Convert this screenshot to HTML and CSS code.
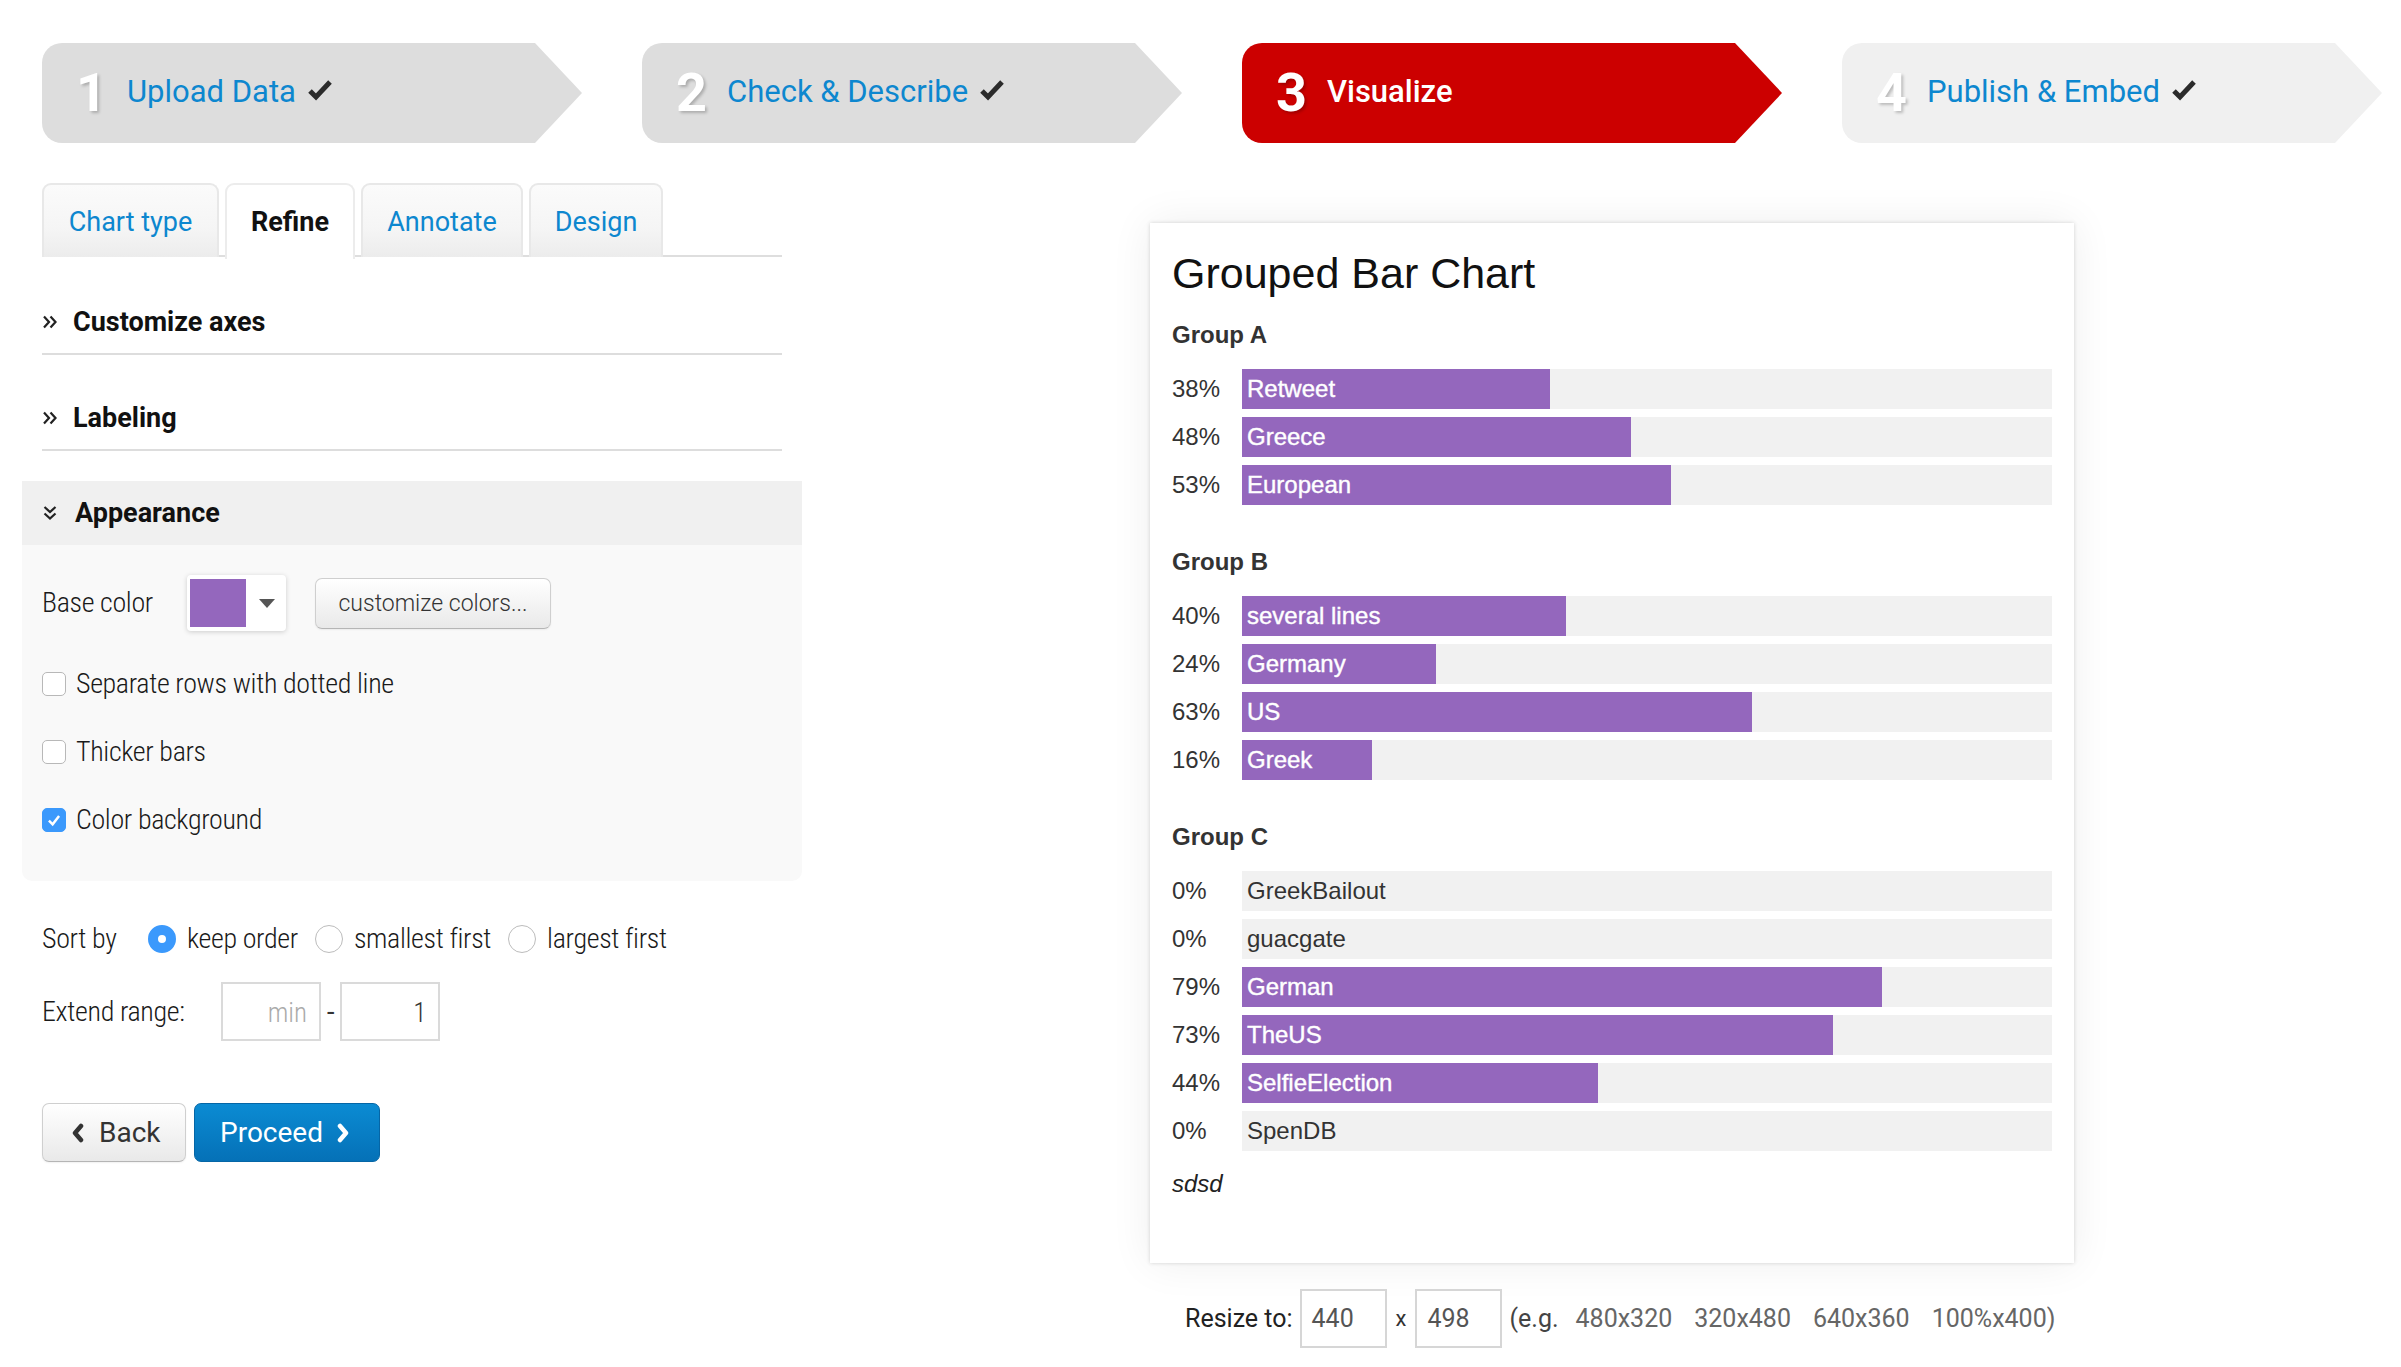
FILE: index.html
```html
<!DOCTYPE html>
<html lang="en">
<head>
<meta charset="utf-8">
<title>Visualize</title>
<link rel="stylesheet" href="styles.css">
</head>
<body>
<div class="page">
  <nav class="steps">
    <div class="step done">
      <span class="num">1</span><span class="step-label">Upload Data</span>
      <svg class="tick" viewBox="0 0 26 22"><polyline points="3,12 9,18 23,3" /></svg>
    </div>
    <div class="step done">
      <span class="num">2</span><span class="step-label">Check &amp; Describe</span>
      <svg class="tick" viewBox="0 0 26 22"><polyline points="3,12 9,18 23,3" /></svg>
    </div>
    <div class="step active">
      <span class="num">3</span><span class="step-label">Visualize</span>
    </div>
    <div class="step later">
      <span class="num">4</span><span class="step-label">Publish &amp; Embed</span>
      <svg class="tick" viewBox="0 0 26 22"><polyline points="3,12 9,18 23,3" /></svg>
    </div>
  </nav>

  <div class="main">
    <div class="left">
      <ul class="tabs">
        <li class="tab t-type">Chart type</li>
        <li class="tab current t-refine">Refine</li>
        <li class="tab t-annotate">Annotate</li>
        <li class="tab t-design">Design</li>
      </ul>

      <div class="section first">
        <svg class="chev" viewBox="0 0 16 16"><path d="M2 2.5 L7 8 L2 13.5 M8.5 2.5 L13.5 8 L8.5 13.5" /></svg>
        <span>Customize axes</span>
      </div>
      <div class="section">
        <svg class="chev" viewBox="0 0 16 16"><path d="M2 2.5 L7 8 L2 13.5 M8.5 2.5 L13.5 8 L8.5 13.5" /></svg>
        <span>Labeling</span>
      </div>

      <div class="panel">
        <div class="panel-head">
          <svg class="chev down" viewBox="0 0 16 16"><path d="M2.5 2 L8 7 L13.5 2 M2.5 8.5 L8 13.5 L13.5 8.5" /></svg>
          <span>Appearance</span>
        </div>
        <div class="panel-body">
          <div class="base-row">
            <span class="cond label-base">Base color</span>
            <div class="swatch-picker">
              <span class="swatch"></span>
              <span class="caret"></span>
            </div>
            <button class="btn-light customize">customize colors...</button>
          </div>
          <div class="check-row">
            <span class="box"></span><span class="cond">Separate rows with dotted line</span>
          </div>
          <div class="check-row">
            <span class="box"></span><span class="cond">Thicker bars</span>
          </div>
          <div class="check-row">
            <span class="box checked"><svg viewBox="0 0 16 16"><polyline points="3.5,8.5 6.8,11.8 12.5,4.5" /></svg></span><span class="cond">Color background</span>
          </div>
        </div>
      </div>

      <div class="sort-row">
        <span class="cond sort-label">Sort by</span>
        <span class="radio on"></span><span class="cond opt">keep order</span>
        <span class="radio"></span><span class="cond opt">smallest first</span>
        <span class="radio"></span><span class="cond opt">largest first</span>
      </div>

      <div class="range-row">
        <span class="cond range-label">Extend range:</span>
        <span class="field placeholder">min</span>
        <span class="dash">-</span>
        <span class="field">1</span>
      </div>

      <div class="buttons">
        <button class="btn-light back">
          <svg class="ico" viewBox="0 0 14 20"><polyline points="10,3 4,10 10,17" /></svg>Back
        </button>
        <button class="btn-primary proceed">
          Proceed<svg class="ico" viewBox="0 0 14 20"><polyline points="4,3 10,10 4,17" /></svg>
        </button>
      </div>
    </div>

    <div class="right">
      <div class="chart">
        <h1 class="chart-title">Grouped Bar Chart</h1>

        <div class="group">
          <div class="group-label">Group A</div>
          <div class="bar-row"><span class="pct">38%</span><div class="track"><div class="fill" style="width:38%"></div><span class="name">Retweet</span></div></div>
          <div class="bar-row"><span class="pct">48%</span><div class="track"><div class="fill" style="width:48%"></div><span class="name">Greece</span></div></div>
          <div class="bar-row"><span class="pct">53%</span><div class="track"><div class="fill" style="width:53%"></div><span class="name">European</span></div></div>
        </div>

        <div class="group">
          <div class="group-label">Group B</div>
          <div class="bar-row"><span class="pct">40%</span><div class="track"><div class="fill" style="width:40%"></div><span class="name">several lines</span></div></div>
          <div class="bar-row"><span class="pct">24%</span><div class="track"><div class="fill" style="width:24%"></div><span class="name">Germany</span></div></div>
          <div class="bar-row"><span class="pct">63%</span><div class="track"><div class="fill" style="width:63%"></div><span class="name">US</span></div></div>
          <div class="bar-row"><span class="pct">16%</span><div class="track"><div class="fill" style="width:16%"></div><span class="name">Greek</span></div></div>
        </div>

        <div class="group">
          <div class="group-label">Group C</div>
          <div class="bar-row"><span class="pct">0%</span><div class="track"><div class="fill" style="width:0%"></div><span class="name zero">GreekBailout</span></div></div>
          <div class="bar-row"><span class="pct">0%</span><div class="track"><div class="fill" style="width:0%"></div><span class="name zero">guacgate</span></div></div>
          <div class="bar-row"><span class="pct">79%</span><div class="track"><div class="fill" style="width:79%"></div><span class="name">German</span></div></div>
          <div class="bar-row"><span class="pct">73%</span><div class="track"><div class="fill" style="width:73%"></div><span class="name">TheUS</span></div></div>
          <div class="bar-row"><span class="pct">44%</span><div class="track"><div class="fill" style="width:44%"></div><span class="name">SelfieElection</span></div></div>
          <div class="bar-row"><span class="pct">0%</span><div class="track"><div class="fill" style="width:0%"></div><span class="name zero">SpenDB</span></div></div>
        </div>

        <div class="notes">sdsd</div>
      </div>

      <div class="resize">
        <span class="resize-label">Resize to:</span>
        <span class="rfield">440</span>
        <span class="times">x</span>
        <span class="rfield">498</span>
        <span class="eg">(e.g.</span>
        <span class="preset">480x320</span>
        <span class="preset">320x480</span>
        <span class="preset">640x360</span>
        <span class="preset">100%x400)</span>
      </div>
    </div>
  </div>
</div>
</body>
</html>
```

FILE: styles.css
```css
* { box-sizing: border-box; }

html, body {
  margin: 0;
  padding: 0;
  background: #ffffff;
}

body {
  font-family: Roboto, "Liberation Sans", sans-serif;
  color: #222;
}

.page {
  padding: 43px 0 0 42px;
}

/* ---------- steps ---------- */
.steps {
  display: flex;
  gap: 60px;
}

.step {
  width: 540px;
  height: 100px;
  display: flex;
  align-items: center;
  padding-left: 34px;
  border-radius: 20px 10px 10px 20px;
  clip-path: polygon(0 0, calc(100% - 47px) 0, 100% 50%, calc(100% - 47px) 100%, 0 100%);
  background: #dddddd;
}

.step.active { background: #cc0000; }
.step.later { background: #f0f0f0; }

.num {
  font-size: 54px;
  font-weight: 700;
  line-height: 1;
  color: #fff;
  text-shadow: 2px 2px 3px rgba(0, 0, 0, 0.22);
  margin-right: 20px;
}

.step-label {
  font-size: 31px;
  color: #0d87cf;
  line-height: 1;
  margin-bottom: 4px;
}

.step.active .step-label {
  color: #fff;
  font-weight: 500;
}

.tick {
  width: 26px;
  height: 22px;
  margin-left: 11px;
  margin-top: -6px;
}

.tick polyline {
  fill: none;
  stroke: #2b2b2b;
  stroke-width: 5;
  stroke-linecap: butt;
  stroke-linejoin: miter;
}

/* ---------- layout ---------- */
.main {
  display: flex;
  gap: 368px;
  margin-top: 40px;
}

.left {
  width: 740px;
  flex: none;
}

.right {
  width: 924px;
  flex: none;
  padding-top: 40px;
}

/* ---------- tabs ---------- */
.tabs {
  list-style: none;
  margin: 0;
  padding: 0;
  display: flex;
  gap: 6px;
  border-bottom: 2px solid #dedede;
  height: 74px;
}

.tab {
  height: 74px;
  padding: 0;
  text-align: center;
  font-size: 27px;
  line-height: 74px;
  color: #0d87cf;
  border: 2px solid #e8e8e8;
  border-bottom: none;
  border-radius: 9px 9px 0 0;
  background: linear-gradient(#fbfbfb, #f5f5f5 60%, #ececec);
}

.t-type { width: 177px; }
.t-refine { width: 130px; }
.t-annotate { width: 162px; }
.t-design { width: 134px; }

.tab.current {
  background: #fff;
  color: #111;
  font-weight: 700;
  height: 76px;
  border-color: #ececec;
}

/* ---------- sections ---------- */
.section {
  display: flex;
  align-items: center;
  padding: 46px 0 14px;
  border-bottom: 2px solid #dddddd;
  font-size: 27px;
  font-weight: 700;
  line-height: 34px;
  color: #111;
}

.section.first { padding-top: 48px; }

.chev {
  width: 16px;
  height: 16px;
  margin-right: 15px;
  flex: none;
}

.chev path {
  fill: none;
  stroke: #222;
  stroke-width: 2.2;
}

/* ---------- appearance panel ---------- */
.panel {
  margin: 30px -20px 0;
  background: #f9f9f9;
  border-radius: 0 0 10px 10px;
}

.panel-head {
  display: flex;
  align-items: center;
  background: #f0f0f0;
  padding: 15px 20px;
  font-size: 27px;
  font-weight: 700;
  line-height: 34px;
  color: #111;
}

.panel-head .chev { margin-right: 17px; }

.panel-body {
  padding: 30px 20px 46px;
}

.cond {
  font-family: "Roboto Condensed", "Liberation Sans Narrow", "DejaVu Sans Condensed", Roboto, sans-serif;
  font-stretch: condensed;
  font-size: 28px;
  letter-spacing: -0.35px;
  font-weight: 300;
  color: #1a1a1a;
  line-height: 30px;
}

.base-row {
  display: flex;
  align-items: center;
  height: 56px;
}

.label-base { width: 145px; flex: none; }

.swatch-picker {
  width: 99px;
  height: 56px;
  background: #fff;
  border-radius: 4px;
  box-shadow: 0 1px 5px rgba(0, 0, 0, 0.18);
  display: flex;
  align-items: center;
  padding-left: 3px;
  flex: none;
}

.swatch {
  width: 56px;
  height: 48px;
  background: #9467bd;
}

.caret {
  margin-left: 13px;
  width: 0;
  height: 0;
  border-left: 8px solid transparent;
  border-right: 8px solid transparent;
  border-top: 9px solid #555;
}

.btn-light {
  font-family: Roboto, sans-serif;
  background: linear-gradient(#ffffff, #e9e9e9);
  border: 1px solid #cfcfcf;
  border-bottom-color: #b5b5b5;
  border-radius: 7px;
  color: #333;
  box-shadow: inset 0 1px 0 rgba(255, 255, 255, 0.6), 0 1px 2px rgba(0, 0, 0, 0.06);
}

.customize {
  margin-left: 29px;
  width: 236px;
  height: 51px;
  font-size: 23px;
  font-weight: 300;
  padding: 0;
}

.check-row {
  display: flex;
  align-items: center;
  margin-top: 38px;
}

.check-row:first-of-type { margin-top: 39px; }

.box {
  width: 24px;
  height: 24px;
  border: 1.5px solid #b8b8b8;
  border-radius: 5px;
  background: #fff;
  margin-right: 10px;
  flex: none;
  display: flex;
  align-items: center;
  justify-content: center;
}

.box.checked {
  background: #3b99fc;
  border-color: #3b99fc;
}

.box svg { width: 18px; height: 18px; }

.box polyline {
  fill: none;
  stroke: #fff;
  stroke-width: 2.2;
}

/* ---------- sort / range ---------- */
.sort-row {
  display: flex;
  align-items: center;
  margin-top: 38px;
  height: 40px;
}

.sort-label { width: 106px; flex: none; }

.radio {
  width: 28px;
  height: 28px;
  border-radius: 50%;
  border: 1.5px solid #bcbcbc;
  background: #fff;
  flex: none;
  margin-right: 11px;
}

.radio.on {
  border: 10px solid #3b99fc;
  background: #fff;
}

.opt { margin-right: 17px; }

.range-row {
  display: flex;
  align-items: center;
  margin-top: 23px;
}

.range-label { width: 179px; flex: none; }

.field {
  width: 100px;
  height: 59px;
  border: 2px solid #dadada;
  background: #fff;
  font-size: 27px;
  font-weight: 300;
  color: #333;
  text-align: right;
  padding: 13px 12px 0;
  font-family: "Roboto Condensed", "Liberation Sans Narrow", Roboto, sans-serif;
  font-stretch: condensed;
}

.field.placeholder { color: #aaa; }

.dash {
  font-size: 27px;
  margin: 0 6px;
  color: #333;
}

/* ---------- buttons ---------- */
.buttons {
  display: flex;
  gap: 8px;
  margin-top: 62px;
}

.back, .proceed {
  height: 59px;
  display: flex;
  align-items: center;
  font-size: 28px;
  font-family: Roboto, sans-serif;
}

.back {
  width: 144px;
  padding: 0 0 0 28px;
}

.back .ico { margin-right: 14px; }

.ico {
  width: 14px;
  height: 20px;
}

.ico polyline {
  fill: none;
  stroke-width: 4.5;
  stroke-linecap: round;
  stroke-linejoin: round;
}

.back .ico polyline { stroke: #333; }

.btn-primary {
  background: linear-gradient(#0b8bd3, #0571b7);
  border: 1px solid #0566a6;
  border-radius: 7px;
  color: #fff;
}

.proceed {
  width: 186px;
  padding: 0 0 0 25px;
}

.proceed .ico { margin-left: 13px; }
.proceed .ico polyline { stroke: #fff; }

/* ---------- chart ---------- */
.chart {
  background: #fff;
  height: 1040px;
  padding: 25px 22px;
  box-shadow: 0 0 4px rgba(0, 0, 0, 0.16), 0 0 40px rgba(0, 0, 0, 0.07);
  font-family: "Liberation Sans", Arial, sans-serif;
}

.chart-title {
  margin: 0;
  font-size: 43px;
  font-weight: 400;
  line-height: 50px;
  color: #111;
}

.group { margin-top: 42px; }
.group:first-of-type { margin-top: 22px; }

.group-label {
  font-size: 24px;
  font-weight: 700;
  line-height: 30px;
  color: #333;
  margin-bottom: 19px;
}

.bar-row {
  display: flex;
  height: 40px;
  margin-top: 8px;
}

.pct {
  width: 70px;
  flex: none;
  font-size: 24px;
  line-height: 40px;
  color: #333;
}

.track {
  flex: 1;
  display: grid;
  background: #f1f1f1;
}

.fill, .name { grid-area: 1 / 1; }

.fill {
  background: #9467bd;
  height: 40px;
}

.name {
  font-size: 24px;
  line-height: 40px;
  padding-left: 5px;
  color: #fff;
  white-space: nowrap;
  -webkit-text-stroke: 0.4px #fff;
}

.name.zero {
  color: #333;
  -webkit-text-stroke: 0;
}

.notes {
  margin-top: 18px;
  font-size: 24px;
  font-style: italic;
  line-height: 30px;
  color: #222;
}

/* ---------- resize ---------- */
.resize {
  display: flex;
  align-items: center;
  margin-top: 26px;
  padding-left: 35px;
  font-size: 25px;
  color: #222;
}

.resize-label { margin-right: 7px; }

.rfield {
  width: 87px;
  height: 59px;
  border: 2px solid #d6d6d6;
  background: #fff;
  color: #555;
  padding: 0 0 0 10px;
  line-height: 55px;
}

.times { margin: 0 9px 0 9px; font-size: 22px; color: #333; }

.eg { margin-left: 7px; margin-right: 17px; color: #444; }

.preset {
  color: #666;
  margin-right: 22px;
}

.preset:last-child { margin-right: 0; }
```
